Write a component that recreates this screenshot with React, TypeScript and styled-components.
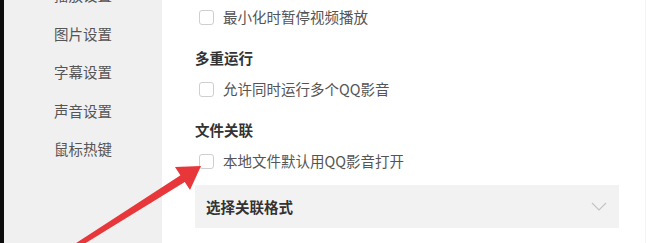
import React, { FC } from "react";
import styled, { createGlobalStyle } from "styled-components";

const GlobalStyle = createGlobalStyle`
  html, body {
    margin: 0;
    padding: 0;
    width: 648px;
    height: 243px;
    overflow: hidden;
    background: #fff;
    font-family: "Noto Sans CJK SC", "Noto Sans", sans-serif;
  }
`;

const navItems = ["播放设置", "图片设置", "字幕设置", "声音设置", "鼠标热键"];

const CheckRow: FC<{ label: string }> = ({ label }) => (
  <RowWrapper>
    <Box />
    <RowLabel>{label}</RowLabel>
  </RowWrapper>
);

const App: FC = () => (
  <>
    <GlobalStyle />
    <Window>
      <Sidebar>
        <NavList>
          {navItems.map((item) => (
            <NavItem key={item}>{item}</NavItem>
          ))}
        </NavList>
      </Sidebar>
      <Main>
        <CheckRow label="最小化时暂停视频播放" />
        <Section>
          <Heading>多重运行</Heading>
          <CheckRow label="允许同时运行多个QQ影音" />
        </Section>
        <Section>
          <Heading>文件关联</Heading>
          <CheckRow label="本地文件默认用QQ影音打开" />
          <Select>
            <SelectText>选择关联格式</SelectText>
            <svg width="16" height="9" viewBox="0 0 16 9">
              <polyline
                points="1,1 8,8 15,1"
                fill="none"
                stroke="#c4c4c4"
                strokeWidth="1.2"
              />
            </svg>
          </Select>
        </Section>
      </Main>
      <Arrow width="648" height="243" viewBox="0 0 648 243">
        <polygon points="70,247 76,249 188,180 184,173" fill="#e8373a" />
        <polygon points="201,166 175,167 190,190" fill="#e8373a" />
      </Arrow>
    </Window>
  </>
);

const Window = styled.div`
  position: relative;
  display: flex;
  width: 648px;
  height: 243px;
  overflow: hidden;
`;

const Sidebar = styled.div`
  width: 158px;
  flex-shrink: 0;
  border-left: 4px solid #0c0c0c;
  background: #f0f0f0;
`;

const NavList = styled.div`
  margin-top: -24px;
  display: flex;
  flex-direction: column;
`;

const NavItem = styled.div`
  height: 38.6px;
  line-height: 38.6px;
  text-align: center;
  font-size: 14.5px;
  color: #555;
`;

const Main = styled.div`
  flex: 1;
  padding: 7px 0 0 33px;
  display: flex;
  flex-direction: column;
  border-right: 1px solid #f3f3f3;
  margin-right: 2px;
`;

const Section = styled.div`
  margin-top: 21px;
  display: flex;
  flex-direction: column;
`;

const Heading = styled.div`
  height: 20px;
  line-height: 20px;
  font-size: 14.5px;
  font-weight: bold;
  color: #333;
  margin-bottom: 11px;
`;

const RowWrapper = styled.div`
  display: flex;
  align-items: center;
  height: 20px;
  padding-left: 4px;
`;

const Box = styled.span`
  width: 13px;
  height: 13px;
  border: 1px solid #cfcfcf;
  border-radius: 3px;
  background: #fff;
  margin-right: 9px;
`;

const RowLabel = styled.span`
  font-size: 14.5px;
  color: #555;
  line-height: 20px;
`;

const Select = styled.div`
  margin-top: 14px;
  width: 424px;
  height: 43px;
  background: #f2f2f2;
  display: flex;
  align-items: center;
  justify-content: space-between;
  padding: 0 12px 0 11px;
  box-sizing: border-box;
`;

const SelectText = styled.span`
  font-size: 14.5px;
  font-weight: bold;
  color: #333;
`;

const Arrow = styled.svg`
  position: absolute;
  left: 0;
  top: 0;
  pointer-events: none;
`;

export default App;
